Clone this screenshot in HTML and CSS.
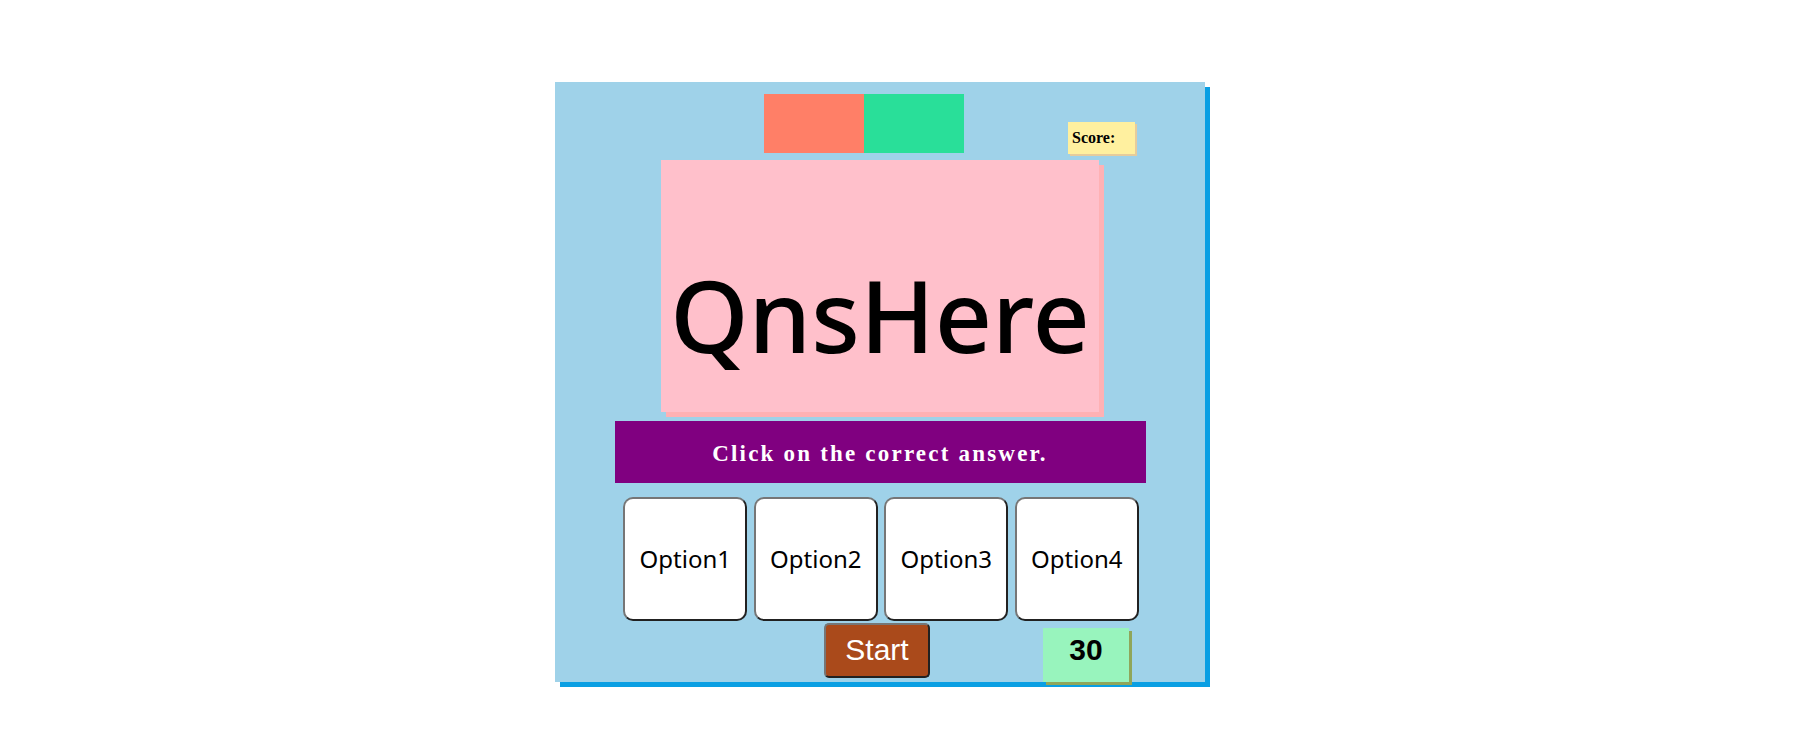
FILE: index.html
```html
<!DOCTYPE html>
<html>
<head>
<meta charset="utf-8">
<title>Quiz</title>
<link rel="stylesheet" href="styles.css">
</head>
<body>
<div class="game">
  <div class="header">
    <div class="bars">
      <div class="bar bar-red"></div>
      <div class="bar bar-green"></div>
    </div>
    <div class="score">Score:</div>
  </div>
  <div class="question">QnsHere</div>
  <div class="prompt">Click on the correct answer.</div>
  <div class="options">
    <button class="option">Option1</button>
    <button class="option">Option2</button>
    <button class="option">Option3</button>
    <button class="option">Option4</button>
  </div>
  <div class="footer">
    <button class="start">Start</button>
    <div class="timer">30</div>
  </div>
</div>
</body>
</html>
```

FILE: styles.css
```css
html, body {
  margin: 0;
  padding: 0;
  background: #ffffff;
}

body {
  padding: 82px 0 50px 555px;
}

.game {
  width: 650px;
  height: 600px;
  box-sizing: border-box;
  padding-top: 12px;
  background: #9fd2e9;
  box-shadow: 5px 5px 0 #0a9fe3;
  display: flex;
  flex-direction: column;
}

.header {
  display: flex;
  align-items: flex-start;
  height: 60px;
  padding-left: 209px;
}

.bars {
  display: flex;
  height: 59px;
}

.bar {
  width: 100px;
  height: 59px;
}

.bar-red {
  background: #ff7f67;
}

.bar-green {
  background: #29df99;
}

.score {
  margin-left: 104px;
  margin-top: 28px;
  width: 67px;
  height: 32px;
  box-sizing: border-box;
  padding: 7px 0 0 4px;
  background: #fff09f;
  box-shadow: 2px 2px 0 #e6cc9c;
  font-family: "Liberation Serif", serif;
  font-weight: bold;
  font-size: 16px;
  color: #000;
}

.question {
  align-self: center;
  margin-top: 6px;
  width: 438px;
  height: 252px;
  box-sizing: border-box;
  padding-top: 104px;
  background: #ffc0cb;
  box-shadow: 5px 5px 0 #ffb1b4;
  font-family: "Noto Sans", sans-serif;
  font-weight: 500;
  font-size: 100px;
  line-height: 100px;
  text-align: center;
  color: #000;
}

.prompt {
  align-self: center;
  margin-top: 9px;
  width: 531px;
  height: 62px;
  box-sizing: border-box;
  padding-top: 4px;
  background: #800080;
  display: flex;
  align-items: center;
  justify-content: center;
  font-family: "Liberation Serif", serif;
  font-weight: bold;
  font-size: 23px;
  letter-spacing: 2.2px;
  color: #ffffff;
}

.options {
  display: flex;
  justify-content: center;
  gap: 6.5px;
  margin-top: 14px;
  padding-left: 2px;
}

.option {
  width: 124px;
  height: 124px;
  margin: 0;
  padding: 0 0 2px 0;
  background: #ffffff;
  border: 2px outset #767676;
  border-radius: 10px;
  font-family: "Noto Sans", sans-serif;
  font-size: 24px;
  color: #000;
}

.footer {
  display: flex;
  align-items: flex-end;
  margin-top: 2px;
  height: 59px;
  padding-left: 269px;
}

.start {
  width: 106px;
  height: 55px;
  margin: 0 0 4px 0;
  padding: 0 0 2px 0;
  background: #aa4a1b;
  border: 2px outset #767676;
  border-radius: 5px;
  font-family: "Liberation Sans", sans-serif;
  font-size: 30px;
  color: #ffffff;
}

.timer {
  margin-left: 113px;
  width: 86px;
  height: 54px;
  box-sizing: border-box;
  padding-top: 5px;
  background: #98f4bd;
  box-shadow: 3px 3px 0 #8fa65a;
  font-family: "Liberation Sans", sans-serif;
  font-weight: bold;
  font-size: 30px;
  text-align: center;
  color: #000;
}
```
